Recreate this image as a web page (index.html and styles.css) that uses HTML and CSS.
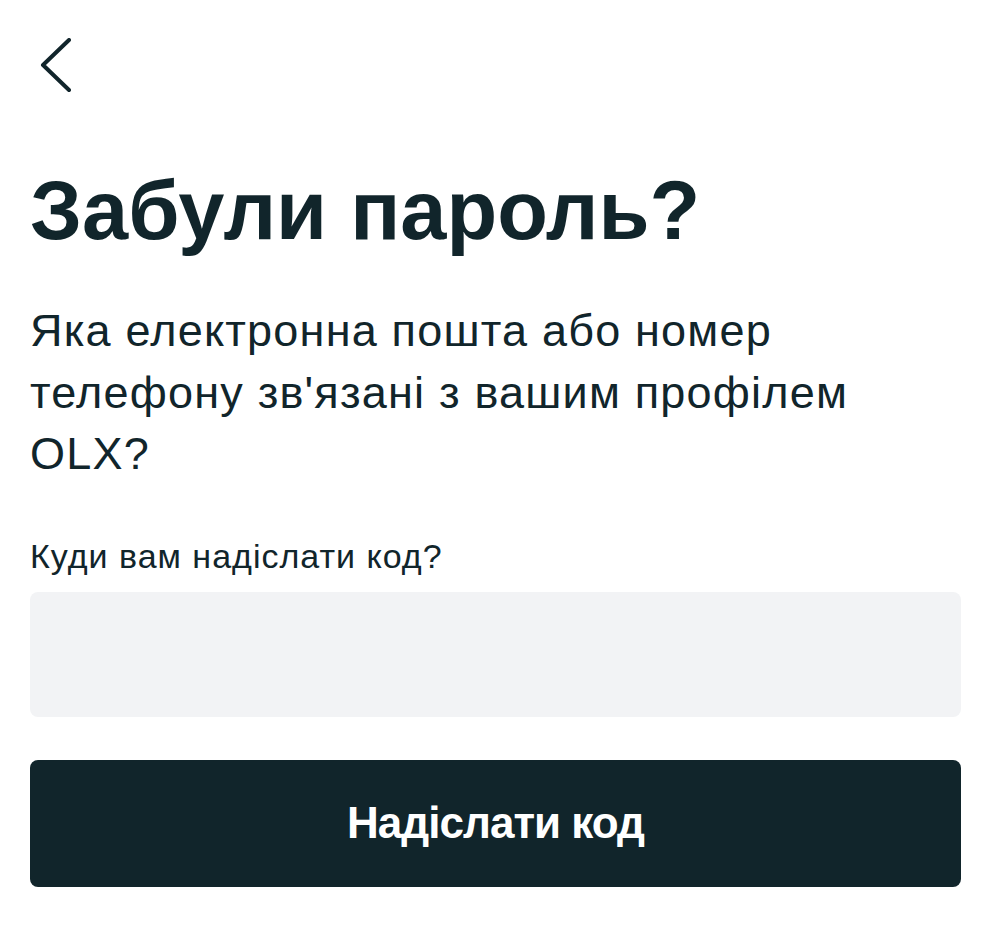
FILE: index.html
```html
<!DOCTYPE html>
<html lang="uk">
<head>
  <meta charset="UTF-8" />
  <meta name="viewport" content="width=device-width, initial-scale=1.0"/>
  <title>Забули пароль?</title>
  <link rel="stylesheet" href="styles.css">
</head>
<body>
  <div class="page">
    <button class="back" aria-label="Назад">
      <svg width="40" height="60" viewBox="0 0 40 60">
        <path d="M30 2 L4 27 L30 52" fill="none" stroke="#11252b" stroke-width="4" stroke-linecap="round" stroke-linejoin="round"/>
      </svg>
    </button>

    <h1>Забули пароль?</h1>
    <p class="lead">Яка електронна пошта або номер телефону зв'язані з вашим профілем OLX?</p>

    <form class="reset-form" onsubmit="return false;">
      <label for="login">Куди вам надіслати код?</label>
      <input id="login" type="text" />
      <button type="submit" class="submit">Надіслати код</button>
    </form>
  </div>
</body>
</html>
```

FILE: styles.css
```css
body {
  font-family: "Liberation Sans", Arial, sans-serif;
  background-color: #fff;
  color: #11252b;
  margin: 0;
}
.page {
  padding: 0 39px 0 30px;
  display: flex;
  flex-direction: column;
}
.back {
  background: none;
  border: none;
  padding: 0;
  margin: 38px 0 0 9px;
  width: 40px;
  height: 60px;
  cursor: pointer;
}
.back svg {
  display: block;
}
h1 {
  font-size: 83px;
  line-height: 83px;
  font-weight: bold;
  margin: 71px 0 0;
}
.lead {
  font-size: 45px;
  line-height: 61.5px;
  letter-spacing: 1.2px;
  margin: 48px 0 0;
}
.reset-form {
  display: flex;
  flex-direction: column;
  margin-top: 51px;
}
.reset-form label {
  font-size: 34px;
  line-height: 40px;
  letter-spacing: 1px;
}
.reset-form input {
  margin-top: 16px;
  height: 125px;
  border: none;
  border-radius: 8px;
  background-color: #f2f3f5;
  padding: 0 20px;
  font-size: 32px;
  font-family: inherit;
  box-sizing: border-box;
}
.submit {
  margin-top: 43px;
  height: 127px;
  border: none;
  border-radius: 8px;
  background-color: #11252b;
  color: #fff;
  font-family: inherit;
  font-size: 44px;
  font-weight: bold;
  letter-spacing: -1px;
  cursor: pointer;
}
```
